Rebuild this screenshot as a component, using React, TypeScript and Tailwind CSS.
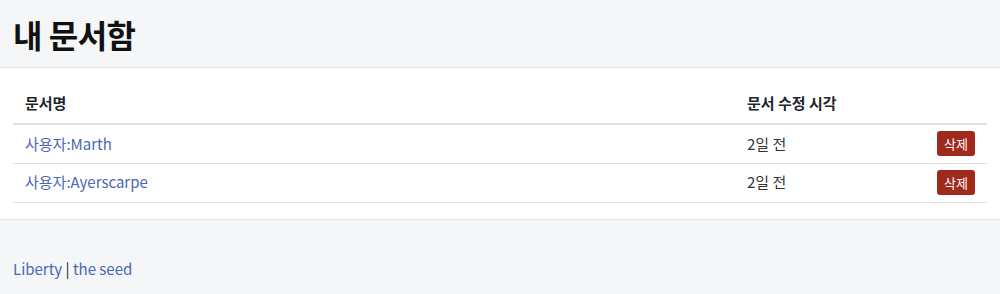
const rows = [
  { title: "사용자:Marth", time: "2일 전" },
  { title: "사용자:Ayerscarpe", time: "2일 전" },
];

export default function App() {
  return (
    <div className="min-h-[294px] bg-[#f5f6f8] text-[#212529] font-['Noto_Sans_CJK_KR','Noto_Sans',sans-serif]">
      <div className="h-[68px] border-b border-[#e3e5e8] px-[13px] flex items-center">
        <h1 className="text-[32px] font-bold leading-none tracking-[-0.5px] text-[#111]">내 문서함</h1>
      </div>
      <div className="bg-white border-b border-[#e3e5e8] px-[13px] pt-[14px] pb-[16px]">
        <table className="w-full text-[15px] border-collapse">
          <thead>
            <tr className="border-b-2 border-[#dee2e6]">
              <th className="text-left font-bold text-[15px] leading-[21px] py-[10px] pl-[12px]">문서명</th>
              <th className="text-left font-bold text-[15px] leading-[21px] py-[10px] w-[180px]">문서 수정 시각</th>
              <th className="w-[60px]"></th>
            </tr>
          </thead>
          <tbody>
            {rows.map((r) => (
              <tr key={r.title} className="border-b border-[#dee2e6] h-[39px]">
                <td className="pl-[12px]"><a href="#" className="text-[#4a67b6]">{r.title}</a></td>
                <td className="text-[#333]">{r.time}</td>
                <td className="text-right pr-[12px]">
                  <button className="bg-[#9f2a1c] text-white text-[13px] leading-none rounded-[3px] px-[7px] py-[6px]">삭제</button>
                </td>
              </tr>
            ))}
          </tbody>
        </table>
      </div>
      <div className="px-[13px] pt-[38px] pb-[14px] text-[15px]">
        <a href="#" className="text-[#4a67b6]">Liberty</a> | <a href="#" className="text-[#4a67b6]">the seed</a>
      </div>
    </div>
  );
}
